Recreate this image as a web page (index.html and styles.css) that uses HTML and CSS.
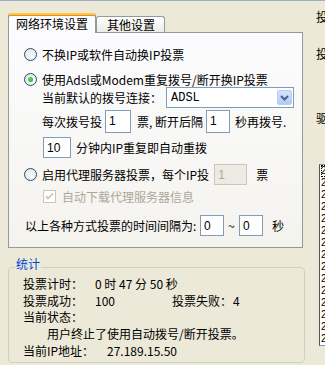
FILE: index.html
```html
<!DOCTYPE html>
<html>
<head>
    <meta charset="utf-8">
    <title>投票设置</title>
    <link rel="stylesheet" href="styles.css">
</head>
<body>
    <div class="window">
        <div class="left">
            <!-- Tabs -->
            <div class="tabs">
                <div class="tab active">网络环境设置</div>
                <div class="tab">其他设置</div>
            </div>

            <div class="panel">
                <div class="row r1"><span class="radio"></span>不换IP或软件自动换IP投票</div>
                <div class="row r2"><span class="radio on"></span>使用Adsl或Modem重复拨号/断开换IP投票</div>

                <div class="row r3 indent">
                    当前默认的拨号连接：
                    <div class="select">
                        <span class="select-text">ADSL</span>
                        <span class="drop">
                            <svg width="9" height="6" viewBox="0 0 9 6"><path d="M1 1 L4.5 4.5 L8 1" fill="none" stroke="#4D6185" stroke-width="2"/></svg>
                        </span>
                    </div>
                </div>

                <div class="row r4 indent">
                    每次拨号投<span class="box w26 ml3">1</span>
                    <span class="ml6">票, 断开后隔</span><span class="box w24 ml3">1</span>
                    <span class="ml5">秒再拨号.</span>
                </div>

                <div class="row r5 indent1">
                    <span class="box w28">10</span><span class="ml5">分钟内IP重复即自动重拨</span>
                </div>

                <div class="row r6"><span class="radio"></span>启用代理服务器投票，每个IP投<span class="box w33 ml5 disabled">1</span>
                    <span class="ml9">票</span>
                </div>

                <div class="row r7 indent1">
                    <span class="check">
                        <svg width="13" height="13" viewBox="0 0 13 13"><path d="M3 6 L5 8.5 L10 3.5" fill="none" stroke="#C4C2B4" stroke-width="1.6"/></svg>
                    </span>
                    <span class="gray">自动下载代理服务器信息</span>
                </div>

                <div class="row r8">
                    <span class="interval-label">以上各种方式投票的时间间隔为:</span><span class="box w24">0</span>
                    <span class="tilde">~</span><span class="box w24">0</span>
                    <span class="ml9">秒</span>
                </div>
            </div>

            <!-- Statistics -->
            <div class="stats">
                <div class="stats-title">统计</div>
                <div class="stat-row first"><span class="k">投票计时：</span><span>0 时 47 分 50 秒</span></div>
                <div class="stat-row"><span class="k">投票成功：</span><span class="v2">100</span><span class="k2">投票失败：</span><span>4</span></div>
                <div class="stat-row"><span class="k">当前状态：</span></div>
                <div class="stat-row status">用户终止了使用自动拨号/断开投票。</div>
                <div class="stat-row"><span class="k ip">当前IP地址：</span><span>27.189.15.50</span></div>
            </div>
        </div>

        <div class="right">
            <div class="side-label first">投</div>
            <div class="side-label second">投</div>
            <div class="side-label third">驱</div>
            <div class="listbox">
                <div class="item focus">2</div>
                <div class="item">2</div>
                <div class="item">2</div>
                <div class="item">2</div>
                <div class="item">2</div>
                <div class="item">2</div>
                <div class="item">2</div>
                <div class="item">2</div>
                <div class="item">2</div>
                <div class="item">2</div>
                <div class="item">2</div>
                <div class="item">2</div>
                <div class="item">2</div>
                <div class="item">2</div>
                <div class="item">2</div>
            </div>
        </div>
    </div>
</body>
</html>
```

FILE: styles.css
```css
body {
    margin: 0;
    width: 325px;
    height: 365px;
    overflow: hidden;
    background: #ECE9D8;
    font-family: "Noto Sans CJK SC", "Liberation Sans", sans-serif;
    font-size: 12px;
    color: #000;
    border-top: 1px solid #9CB0CE;
    box-sizing: border-box;
}
.window { display: flex; }
.left { padding-left: 8px; width: 297px; flex: none; }

/* tabs */
.tabs {
    display: flex;
    align-items: flex-end;
    margin-top: 11px;
    height: 20px;
    position: relative;
    z-index: 1;
}
.tab {
    height: 15px;
    line-height: 16px;
    padding: 0 9px 0 10px;
    border: 1px solid #919B9C;
    border-bottom: none;
    border-radius: 3px 3px 0 0;
    background: linear-gradient(#FFFFFF, #ECEBE6);
}
.tab.active {
    height: 18px;
    line-height: 18px;
    padding: 0 7px;
    width: 72px;
    border-top: 2px solid #FFC73C;
    box-shadow: inset 0 1px 0 #E68B2C;
    background: #FCFCFE;
    margin-bottom: -1px;
    position: relative;
    z-index: 2;
}

.panel {
    border: 1px solid #919B9C;
    background: linear-gradient(#FCFCFE, #F4F3EE);
    width: 278px;
    height: 202px;
    padding: 12px 0 0 15px;
}
.row { display: flex; align-items: center; white-space: nowrap; }
.r1 { height: 16px; margin-top: 1px; }
.r2 { height: 16px; margin-top: 9px; }
.r3 { height: 21px; }
.r4 { height: 23px; margin-top: 2px; }
.r5 { height: 21px; margin-top: 4px; }
.r6 { height: 21px; margin-top: 6px; }
.r7 { height: 14px; margin-top: 4px; }
.r8 { height: 21px; margin-top: 12px; margin-left: 1px; }
.indent { padding-left: 18px; }
.indent1 { padding-left: 19px; }

.radio {
    width: 11px;
    height: 11px;
    border: 1px solid #1C5180;
    border-radius: 50%;
    background: radial-gradient(circle at 60% 60%, #FFFFFF, #DCDCD5);
    margin-right: 5px;
    position: relative;
    flex: none;
}
.radio.on::after {
    content: "";
    position: absolute;
    left: 3px;
    top: 3px;
    width: 5px;
    height: 5px;
    border-radius: 50%;
    background: radial-gradient(circle at 40% 40%, #5DE05D, #21A121);
}

.select {
    margin-left: 4px;
    width: 126px;
    height: 19px;
    border: 1px solid #7F9DB9;
    background: #fff;
    display: flex;
    align-items: center;
    justify-content: space-between;
}
.select-text { padding-left: 4px; font-family: "Liberation Mono", monospace; font-size: 12px; }
.drop {
    width: 15px;
    height: 15px;
    margin-right: 1px;
    background: linear-gradient(#D6E3FE, #B3C9F7);
    border: 1px solid #BBCCF1;
    border-radius: 2px;
    box-sizing: border-box;
    display: flex;
    align-items: center;
    justify-content: center;
}

.box {
    height: 21px;
    line-height: 20px;
    border: 1px solid #7F9DB9;
    background: #fff;
    padding-left: 3px;
    box-sizing: border-box;
    flex: none;
    font-family: "Liberation Sans", sans-serif;
}
.r4 .box { height: 23px; line-height: 21px; }
.box.disabled { background: #EBEBE4; border-color: #C9C7BA; color: #ACA899; }
.w24 { width: 24px; }
.w26 { width: 26px; }
.w28 { width: 28px; }
.w33 { width: 33px; }
.ml3 { margin-left: 3px; }
.ml5 { margin-left: 5px; }
.ml6 { margin-left: 6px; }
.ml9 { margin-left: 9px; }

.check {
    width: 11px;
    height: 11px;
    border: 1px solid #CAC8BB;
    background: #fff;
    margin-right: 6px;
    display: flex;
}
.check svg { margin: -1px; }
.gray { color: #ACA899; }

.interval-label { width: 175px; }
.tilde { margin: 0 4px; width: 7px; }

/* stats group */
.stats {
    margin-top: 19px;
    padding-left: 14px;
    border: 1px solid #D0D0BF;
    border-radius: 4px;
    width: 281px;
    height: 94px;
}
.stats-title {
    width: fit-content;
    margin: -10px 0 0 -8px;
    padding: 0 1px;
    height: 12px;
    line-height: 12px;
    color: #0046D5;
    background: #ECE9D8;
}
.stat-row { display: flex; height: 16.7px; line-height: 17px; white-space: nowrap; }
.stat-row.first { margin-top: 5px; }
.k { width: 72px; flex: none; }
.k.ip { width: 84px; }
.v2 { width: 77px; flex: none; }
.k2 { width: 61px; flex: none; }
.status { padding-left: 24px; }

/* right side, cut off by window edge */
.right { margin-left: 11px; width: 60px; flex: none; }
.side-label { line-height: 12px; }
.side-label.first { margin-top: 10px; }
.side-label.second { margin-top: 25px; }
.side-label.third { margin-top: 52px; }
.listbox {
    margin: 40px 0 0 3px;
    height: 180px;
    border: 1px solid #7F9DB9;
    border-left-color: #555;
    background: #fff;
    overflow: hidden;
    padding-left: 1px;
}
.item { line-height: 12px; height: 12px; font-size: 10px; font-family: "Liberation Sans", sans-serif; }
.item.focus { outline: 1px dotted #000; outline-offset: -1px; }
```
